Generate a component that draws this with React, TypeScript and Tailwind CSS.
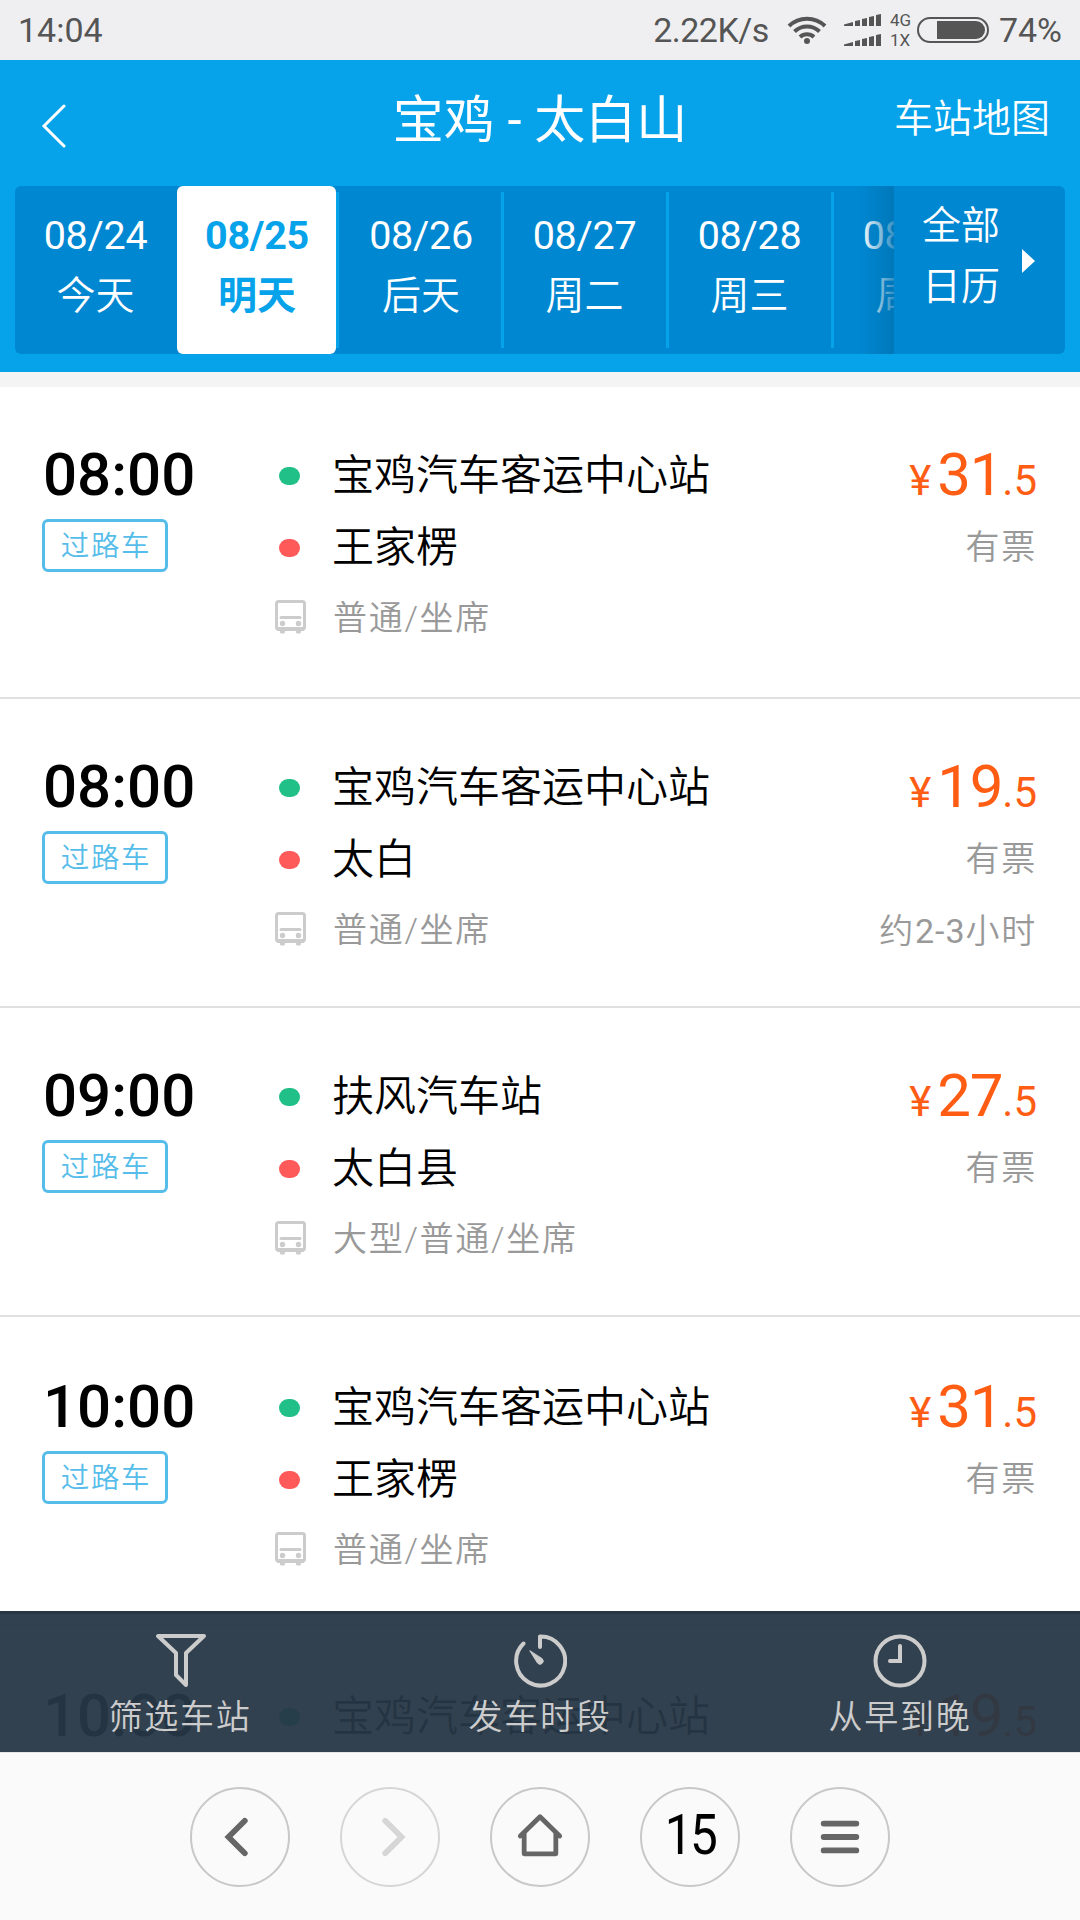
import clsx from 'clsx';

const days = [
  { date: '08/24', label: '今天' },
  { date: '08/25', label: '明天' },
  { date: '08/26', label: '后天' },
  { date: '08/27', label: '周二' },
  { date: '08/28', label: '周三' },
  { date: '08/29', label: '周四' },
];

interface Trip {
  time: string;
  from: string;
  to: string;
  type: string;
  yuan: string;
  cents: string;
  duration?: string;
}

const trips: Trip[] = [
  { time: '08:00', from: '宝鸡汽车客运中心站', to: '王家楞', type: '普通/坐席', yuan: '31', cents: '.5' },
  { time: '08:00', from: '宝鸡汽车客运中心站', to: '太白', type: '普通/坐席', yuan: '19', cents: '.5', duration: '约2-3小时' },
  { time: '09:00', from: '扶风汽车站', to: '太白县', type: '大型/普通/坐席', yuan: '27', cents: '.5' },
  { time: '10:00', from: '宝鸡汽车客运中心站', to: '王家楞', type: '普通/坐席', yuan: '31', cents: '.5' },
  { time: '10:00', from: '宝鸡汽车客运中心站', to: '太白', type: '普通/坐席', yuan: '19', cents: '.5' },
];

function SignalBars() {
  return (
    <svg width="38" height="12" viewBox="0 0 38 12" fill="#555">
      <path d="M0 12V10.5L9 8V12Z" />
      <path d="M11 12V7L16 6V12Z" />
      <path d="M18 12V5L23 4V12Z" />
      <path d="M25 12V3L30 2V12Z" />
      <path d="M32 12V1L37 0V12Z" />
    </svg>
  );
}

function StatusBar() {
  return (
    <div className="flex h-[60px] items-center bg-[#efeff1] pr-[18px] pl-[18px] text-[34px] text-[#555]">
      <span className="leading-[60px]">14:04</span>
      <span className="ml-auto leading-[60px] tracking-[-0.5px]">2.22K/s</span>
      <svg className="ml-[18px]" width="40" height="30" viewBox="0 0 40 30" fill="none" stroke="#555" strokeWidth="4">
        <path d="M2 11a26 26 0 0 1 36 0" />
        <path d="M7.500 16.500a18 18 0 0 1 25 0" />
        <path d="M13 22a10.500 10.500 0 0 1 14 0" />
        <circle cx="20" cy="26" r="3" fill="#555" stroke="none" />
      </svg>
      <div className="ml-[17px] flex flex-col gap-2">
        <SignalBars />
        <SignalBars />
      </div>
      <div className="ml-2 w-[24px] text-[17px] leading-[20px]">
        <div>4G</div>
        <div>1X</div>
      </div>
      <div className="ml-[3px] flex h-[26px] w-[72px] items-center justify-end rounded-full border-2 border-[#555] px-0.5">
        <div className="h-[18px] w-[48px] rounded-r-full bg-[#555]" />
      </div>
      <span className="ml-[10px] leading-[60px]">74%</span>
    </div>
  );
}

function Header() {
  return (
    <header className="h-[312px] bg-[#06a3eb] px-[15px] text-white">
      <div className="grid h-[126px] grid-cols-[200px_1fr_200px] items-center">
        <svg className="mt-[6px] ml-[26px]" width="26" height="44" viewBox="0 0 26 44" fill="none" stroke="#fff" strokeWidth="3" strokeLinecap="round">
          <path d="M23 2L3 22L23 42" />
        </svg>
        <h1 className="-mt-[4px] text-center text-[51px] leading-[60px]">宝鸡 - 太白山</h1>
        <span className="-mt-[8px] pr-[15px] text-right text-[39px] leading-[48px] font-[350] whitespace-nowrap">车站地图</span>
      </div>
      <div className="flex h-[168px] overflow-hidden rounded-md bg-[#0087d1]">
        <div className="relative flex w-[879px] overflow-hidden">
          {days.map((day, i) => (
            <div key={day.date} className="flex shrink-0 items-center">
              <div
                className={clsx(
                  'h-[168px] pt-[20px] text-center leading-[60px]',
                  i === 1 ? 'w-[159px] rounded-md bg-white pl-px text-[#06a3eb]' : 'w-[162px] pr-px',
                  i === 2 && 'pl-[3px]',
                )}
              >
                <div className={clsx('text-[39.5px] tracking-[-0.3px]', i === 1 && 'font-bold')}>{day.date}</div>
                <div className={clsx('text-[39px]', i === 1 ? 'font-bold' : 'font-[350]')}>{day.label}</div>
              </div>
              {i > 0 && <div className="h-[156px] w-[3px] bg-[#06a3eb]" />}
            </div>
          ))}
          <div className="absolute inset-y-0 right-0 w-[34px] bg-linear-to-r from-[#0074b4]/0 to-[#0074b4]/80" />
        </div>
        <div className="flex flex-1 pl-[28px]">
          <div className="pt-[10px] text-[39px] leading-[61px] font-[350]">
            <div>全部</div>
            <div>日历</div>
          </div>
          <svg className="mt-[63px] ml-[22px]" width="13" height="24" viewBox="0 0 13 24" fill="#fff">
            <path d="M0 0L13 12L0 24Z" />
          </svg>
        </div>
      </div>
    </header>
  );
}

function BusIcon() {
  return (
    <svg width="31" height="34" viewBox="0 0 31 34" fill="none" stroke="#ccc" strokeWidth="3">
      <rect x="1.500" y="1.500" width="28" height="27.500" rx="2" />
      <path d="M2 29H29" strokeWidth="4" />
      <path d="M6 17.500H25" strokeLinecap="round" />
      <g fill="#ccc" stroke="none">
        <circle cx="7.500" cy="23.500" r="2.700" />
        <circle cx="23.500" cy="23.500" r="2.700" />
        <rect x="5" y="29" width="5" height="4.500" rx="1.500" />
        <rect x="21" y="29" width="5" height="4.500" rx="1.500" />
      </g>
    </svg>
  );
}

function TripCard({ trip }: { trip: Trip }) {
  return (
    <li className="flex h-[309px] shrink-0 border-b-2 border-[#e0e0e0] pr-[43px] pl-[42px] first:h-[312px] nth-[n+4]:pt-[2px]">
      <div className="w-[234px] pt-[52px]">
        <div className="pl-px text-[60px] leading-[72px] font-medium text-black">{trip.time}</div>
        <div className="mt-[8px] h-[53px] w-[126px] rounded-md border-3 border-[#56bdea] pl-0.5 text-center text-[28.5px] leading-[49px] font-[350] tracking-[1.7px] text-[#56bdea]">
          过路车
        </div>
      </div>
      <div className="flex-1 pt-[53px] text-[42px] leading-[72px] text-black">
        <div className="flex items-center font-[350]">
          <span className="mr-[32px] ml-[3px] h-[18px] w-[21px] rounded-full bg-[#20c088]" />
          {trip.from}
        </div>
        <div className="flex items-center font-[350]">
          <span className="mr-[32px] ml-[3px] h-[18px] w-[21px] rounded-full bg-[#ff5a5a]" />
          {trip.to}
        </div>
        <div className="flex items-center text-[34px] leading-[69px] font-[350] tracking-[1.7px] text-[#999]">
          <span className="-mt-[3px] mr-[27px] -ml-px">
            <BusIcon />
          </span>
          {trip.type}
        </div>
      </div>
      <div className="pt-[52px] text-right text-[34px] leading-[72px] tracking-[1.7px] text-[#999]">
        <div className="flex h-[72px] items-baseline justify-end text-[42px] tracking-normal text-[#ff5c14]">
          ¥<span className="ml-[6px] text-[60px] tracking-[-1.2px]">{trip.yuan}</span>
          {trip.cents}
        </div>
        <div className="font-[350]">有票</div>
        {trip.duration && (
          <div className="font-[350]">
            约<span className="font-normal tracking-[1px]">2-3</span>
            {trip.duration.slice(4)}
          </div>
        )}
      </div>
    </li>
  );
}

function FilterBar() {
  return (
    <div className="absolute inset-x-0 bottom-0 grid h-[141px] grid-cols-3 border-t-3 border-[#2a3644] bg-[#273746]/95 text-[34px] leading-[58px] font-[350] tracking-[1.7px] text-[#ccc]">
      <div className="flex flex-col items-center pt-[20px]">
        <svg className="ml-[2px]" width="50" height="54" viewBox="0 0 50 54" fill="none" stroke="#ccc" strokeWidth="4" strokeLinejoin="round">
          <path d="M2 2H48L30 19V51L20 41V19Z" />
        </svg>
        <span>筛选车站</span>
      </div>
      <div className="flex flex-col items-center pt-[20px]">
        <svg width="54" height="54" viewBox="0 0 54 54" fill="none" stroke="#ccc" strokeWidth="4" strokeLinecap="round" strokeLinejoin="round">
          <path d="M10.500 9.500A24.500 24.500 0 1 0 27 2.500V13" />
          <path d="M17 17L24.500 29A3 3 0 1 0 29.500 25Z" fill="#ccc" stroke="#ccc" strokeWidth="1" />
        </svg>
        <span>发车时段</span>
      </div>
      <div className="flex flex-col items-center pt-[20px]">
        <svg width="54" height="54" viewBox="0 0 54 54" fill="none" stroke="#ccc" strokeWidth="4" strokeLinecap="round">
          <circle cx="27" cy="27" r="24.500" />
          <path d="M27 12V27H17" />
        </svg>
        <span>从早到晚</span>
      </div>
    </div>
  );
}

const navButton = 'flex size-[100px] items-center justify-center rounded-full border-2';

function BrowserNav() {
  return (
    <nav className="flex h-[168px] justify-center gap-[50px] border-t border-[#e5e5e5] bg-[#fafafa] pt-[34px]">
      <div className={clsx(navButton, 'border-[#c8c8c8]')}>
        <svg width="100" height="100" viewBox="0 0 100 100" fill="none" stroke="#666" strokeWidth="6" strokeLinecap="round">
          <path d="M55 33L38 50L55 67" />
        </svg>
      </div>
      <div className={clsx(navButton, 'border-[#d6d6d6]')}>
        <svg width="100" height="100" viewBox="0 0 100 100" fill="none" stroke="#d6d6d6" strokeWidth="6" strokeLinecap="round">
          <path d="M45 33L62 50L45 67" />
        </svg>
      </div>
      <div className={clsx(navButton, 'border-[#c8c8c8]')}>
        <svg width="100" height="100" viewBox="0 0 100 100" fill="none" stroke="#666" strokeWidth="5" strokeLinecap="round" strokeLinejoin="round">
          <path d="M29.500 49L50 29L70.500 49" />
          <path d="M33.500 46V67.500H66.500V46" />
        </svg>
      </div>
      <div className={clsx(navButton, 'border-[#c8c8c8] text-[55px] text-black')}>
        <span className="-mt-[3px] scale-x-90 tracking-[-3px]">15</span>
      </div>
      <div className={clsx(navButton, 'border-[#c8c8c8]')}>
        <svg width="100" height="100" viewBox="0 0 100 100" fill="none" stroke="#666" strokeWidth="6" strokeLinecap="round">
          <path d="M33 36H67M33 50H67M33 64H67" />
        </svg>
      </div>
    </nav>
  );
}

export default function App() {
  return (
    <div className="flex h-[1920px] w-[1080px] flex-col overflow-hidden bg-white font-['Roboto','Noto_Sans_CJK_SC',sans-serif]">
      <StatusBar />
      <Header />
      <div className="h-[15px] bg-[#f4f4f4]" />
      <main className="relative flex-1 overflow-hidden">
        <ul className="flex flex-col">
          {trips.map((trip, i) => (
            <TripCard key={i} trip={trip} />
          ))}
        </ul>
        <FilterBar />
      </main>
      <BrowserNav />
    </div>
  );
}
